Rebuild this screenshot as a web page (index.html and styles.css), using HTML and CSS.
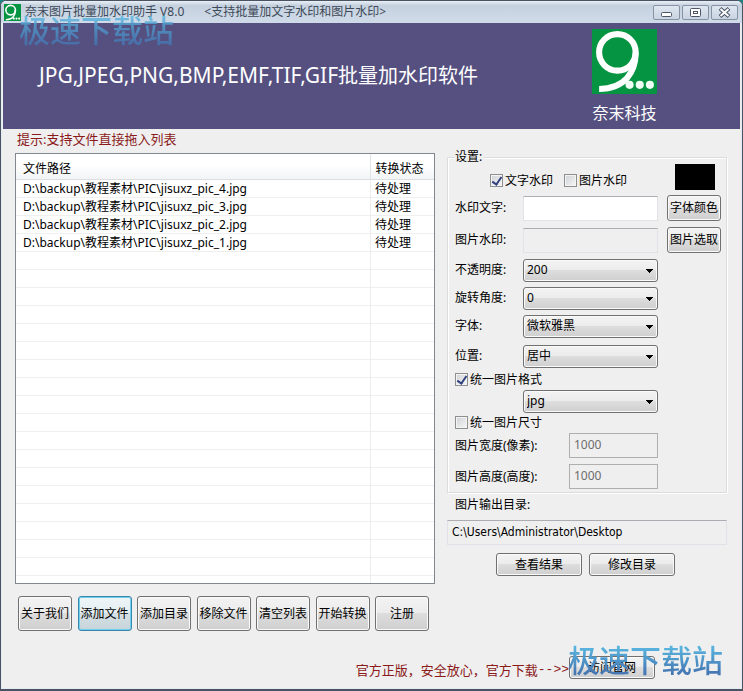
FILE: index.html
```html
<!DOCTYPE html>
<html lang="zh-CN">
<head>
  <meta charset="UTF-8">
  <meta name="viewport" content="width=device-width, initial-scale=1.0">
  <title>奈末图片批量加水印助手 V8.0</title>
  <link rel="stylesheet" href="styles.css">
</head>
<body>
  <div class="window">
    <div class="titlebar">
      <svg class="app-icon" viewBox="0 0 64 64">
        <rect width="64" height="64" fill="#059441"/>
        <circle cx="25" cy="23" r="18" fill="none" stroke="#fff" stroke-width="6"/>
        <path d="M43 23 C43 43 32 59 7 59" fill="none" stroke="#fff" stroke-width="6"/>
        <circle cx="37" cy="55" r="4" fill="#fff"/>
        <circle cx="47" cy="55" r="4" fill="#fff"/>
        <circle cx="57" cy="55" r="4" fill="#fff"/>
      </svg>
      <span class="title">奈末图片批量加水印助手 V8.0</span>
      <span class="subtitle">&lt;支持批量加文字水印和图片水印&gt;</span>
      <div class="window-buttons">
        <button type="button" aria-label="最小化">
          <svg width="26" height="14" viewBox="0 0 26 14"><rect x="7.500" y="6.500" width="10" height="4" rx="1" fill="#fff" stroke="#4b5565"/></svg>
        </button>
        <button type="button" aria-label="最大化">
          <svg width="26" height="14" viewBox="0 0 26 14"><rect x="7.500" y="2.500" width="10" height="8" rx="1" fill="#fff" stroke="#4b5565"/><rect x="10.500" y="5.500" width="4" height="2" fill="#fff" stroke="#4b5565"/></svg>
        </button>
        <button type="button" aria-label="关闭">
          <svg width="26" height="14" viewBox="0 0 26 14"><path d="M8 2.500 L17 10.500 M17 2.500 L8 10.500" stroke="#4b5565" stroke-width="4"/><path d="M8.500 3 L16.500 10 M16.500 3 L8.500 10" stroke="#fff" stroke-width="2"/></svg>
        </button>
      </div>
    </div>

    <div class="banner">
      <h1><span class="formats">JPG,JPEG,PNG,BMP,EMF,TIF,GIF</span>批量加水印软件</h1>
      <div class="brand">
        <svg class="logo" viewBox="0 0 64 64">
          <rect width="64" height="64" fill="#059441"/>
          <circle cx="25" cy="23" r="18" fill="none" stroke="#fff" stroke-width="6"/>
          <path d="M43 23 C43 43 32 59 7 59" fill="none" stroke="#fff" stroke-width="6"/>
          <circle cx="37" cy="55" r="4" fill="#f0fff4"/>
          <circle cx="47" cy="55" r="4" fill="#f0fff4"/>
          <circle cx="57" cy="55" r="4" fill="#f0fff4"/>
        </svg>
        <span>奈末科技</span>
      </div>
    </div>

    <div class="main">
      <div class="files">
        <p class="hint">提示:支持文件直接拖入列表</p>
        <div class="file-list">
          <table>
            <thead>
              <tr><th>文件路径</th><th class="state">转换状态</th></tr>
            </thead>
            <tbody>
              <tr><td>D:\backup\教程素材\PIC\jisuxz_pic_4.jpg</td><td>待处理</td></tr>
              <tr><td>D:\backup\教程素材\PIC\jisuxz_pic_3.jpg</td><td>待处理</td></tr>
              <tr><td>D:\backup\教程素材\PIC\jisuxz_pic_2.jpg</td><td>待处理</td></tr>
              <tr><td>D:\backup\教程素材\PIC\jisuxz_pic_1.jpg</td><td>待处理</td></tr>
            </tbody>
          </table>
        </div>
        <div class="actions">
          <button type="button" class="btn">关于我们</button>
          <button type="button" class="btn active">添加文件</button>
          <button type="button" class="btn">添加目录</button>
          <button type="button" class="btn">移除文件</button>
          <button type="button" class="btn">清空列表</button>
          <button type="button" class="btn">开始转换</button>
          <button type="button" class="btn">注册</button>
        </div>
      </div>

      <div class="side">
        <fieldset class="settings">
          <legend>设置:</legend>
          <div class="row modes">
            <label class="check"><input type="checkbox" checked>文字水印</label>
            <label class="check"><input type="checkbox">图片水印</label>
            <div class="swatch"></div>
          </div>
          <div class="row text-row">
            <label for="text">水印文字:</label>
            <input type="text" id="text" class="field">
            <button type="button" class="btn">字体颜色</button>
          </div>
          <div class="row text-row">
            <label for="image">图片水印:</label>
            <input type="text" id="image" class="field" readonly>
            <button type="button" class="btn">图片选取</button>
          </div>
          <div class="row">
            <label for="opacity">不透明度:</label>
            <select id="opacity"><option>200</option></select>
          </div>
          <div class="row">
            <label for="angle">旋转角度:</label>
            <select id="angle"><option>0</option></select>
          </div>
          <div class="row">
            <label for="font">字体:</label>
            <select id="font"><option>微软雅黑</option></select>
          </div>
          <div class="row text-row">
            <label for="position">位置:</label>
            <select id="position"><option>居中</option></select>
          </div>
          <div class="row check-row">
            <label class="check"><input type="checkbox" checked>统一图片格式</label>
          </div>
          <div class="row format-row">
            <select aria-label="图片格式"><option>jpg</option></select>
          </div>
          <div class="row check-row">
            <label class="check"><input type="checkbox">统一图片尺寸</label>
          </div>
          <div class="row size-row">
            <label for="width">图片宽度(像素):</label>
            <input type="text" id="width" class="field" value="1000" disabled>
          </div>
          <div class="row size-row">
            <label for="height">图片高度(高度):</label>
            <input type="text" id="height" class="field" value="1000" disabled>
          </div>
        </fieldset>

        <label class="output-label" for="output">图片输出目录:</label>
        <input type="text" id="output" class="field output" value="C:\Users\Administrator\Desktop" readonly>
        <div class="output-buttons">
          <button type="button" class="btn">查看结果</button>
          <button type="button" class="btn">修改目录</button>
        </div>
      </div>
    </div>

    <div class="footer">
      <span>官方正版，安全放心，官方下载</span><span class="arrow">--&gt;&gt;</span>
      <button type="button" class="btn">访问官网</button>
    </div>

    <div class="stamp stamp-top">极速下载站</div>
    <div class="stamp stamp-bottom">极速下载站</div>
  </div>
</body>
</html>
```

FILE: styles.css
```css
* {
  box-sizing: border-box;
}
body {
  margin: 0;
  background: #1d8583;
  font-family: "Noto Sans", "Noto Sans CJK SC", sans-serif;
  font-size: 12px;
  line-height: 18px;
  color: #000;
}
button, input, select {
  font: inherit;
  color: inherit;
  margin: 0;
}
.window {
  position: relative;
  display: flex;
  flex-direction: column;
  min-height: 100vh;
  padding: 0 2px 2px;
  border: 1px solid #4a5361;
  border-bottom-width: 2px;
  border-radius: 6px 6px 0 0;
  background: #efefef;
  box-shadow: inset 0 0 0 1px #e3eaf2;
  overflow: hidden;
}

/* title bar */
.titlebar {
  display: flex;
  align-items: center;
  height: 22px;
  margin: 0 -2px;
  padding: 0 4px 0 3px;
  background: linear-gradient(#e9eff6, #c5d1df 20%, #cfdbe8);
  color: #3d4958;
  white-space: nowrap;
}
.app-icon {
  width: 17px;
  height: 17px;
  margin-right: 4px;
}
.subtitle {
  margin-left: 20px;
}
.window-buttons {
  display: flex;
  gap: 2px;
  margin-left: auto;
}
.window-buttons button {
  width: 27px;
  height: 15px;
  padding: 0;
  border: 1px solid #8793a3;
  border-radius: 2px;
  background: linear-gradient(#dfe7f0, #c8d4e1);
  overflow: hidden;
}
.window-buttons svg {
  display: block;
}

/* banner */
.banner {
  display: flex;
  justify-content: space-between;
  height: 106px;
  padding: 6px 83px 0 36px;
  background: #555080;
  color: #fff;
}
.banner h1 {
  margin: 32px 0 0;
  font-size: 20px;
  font-weight: normal;
  line-height: 28px;
  white-space: nowrap;
}
.formats {
  font-size: 21px;
}
.brand {
  display: flex;
  flex-direction: column;
  align-items: center;
  font-size: 16px;
  line-height: 24px;
}
.logo {
  width: 65px;
  height: 65px;
  margin-bottom: 7px;
}

/* file list */
.main {
  flex: 1;
  display: flex;
  gap: 12px;
  padding: 0 13px 0 12px;
}
.files {
  flex: 3;
  display: flex;
  flex-direction: column;
}
.hint {
  height: 24px;
  margin: 0;
  padding: 1px 2px;
  font-size: 13px;
  color: #8b1a1a;
}
.file-list {
  flex: 1;
  border: 1px solid #828790;
  background:
    linear-gradient(#ededed, #ededed) right 63px top 0 / 1px 100% no-repeat,
    repeating-linear-gradient(#fff 0 17px, #efefef 17px 18px) 0 26px no-repeat,
    #fff;
}
table {
  width: 100%;
  border-collapse: collapse;
  table-layout: fixed;
}
th {
  height: 26px;
  padding: 3px 0 0 7px;
  text-align: left;
  font-weight: normal;
  background: linear-gradient(#fff 40%, #f2f3f5);
  box-shadow: inset 0 -1px #dcdfe2;
}
td {
  height: 18px;
  padding: 0 0 0 7px;
  white-space: nowrap;
}
.state {
  width: 64px;
  border-left: 1px solid #e2e5e8;
}
th:last-child, td:last-child {
  padding-left: 5px;
}
.actions {
  display: flex;
  justify-content: space-between;
  padding: 12px 6px 0 3px;
}

/* controls */
.btn {
  width: 54px;
  height: 26px;
  padding: 0;
  border: 1px solid #707070;
  border-radius: 3px;
  background: linear-gradient(#f3f3f3, #ebebeb 50%, #dddddd 50%, #cfcfcf);
  box-shadow: inset 0 0 0 1px #fafafa;
  white-space: nowrap;
}
.actions .btn {
  height: 35px;
}
.btn.active {
  border-color: #3a86ad;
  background: linear-gradient(#eef5f7, #e4eef2 50%, #d5e0e4 50%, #c6d4d9);
  box-shadow: inset 0 0 0 1px #6fd0ee;
}
.field {
  width: 135px;
  height: 25px;
  padding: 0 4px;
  border: 1px solid #dfe2e6;
  border-top-color: #abadb3;
  background: #fff;
}
.field:read-only {
  background: #efefef;
}
.field:disabled {
  border-color: #afafaf;
  color: #6d6d6d;
}
select {
  width: 135px;
  height: 23px;
  padding: 0 3px;
  border: 1px solid #707070;
  border-radius: 3px;
  appearance: none;
  background:
    linear-gradient(#000, #000) right 4px top 9px / 7px 1px no-repeat,
    linear-gradient(#000, #000) right 5px top 10px / 5px 1px no-repeat,
    linear-gradient(#000, #000) right 6px top 11px / 3px 1px no-repeat,
    linear-gradient(#000, #000) right 7px top 12px / 1px 1px no-repeat,
    linear-gradient(#f3f3f3, #ebebeb 50%, #dddddd 50%, #cfcfcf);
  box-shadow: inset 0 0 0 1px #fafafa;
}
.check {
  display: flex;
  align-items: center;
  gap: 2px;
}
.check input {
  position: relative;
  width: 13px;
  height: 13px;
  border: 1px solid #8e8f8f;
  appearance: none;
  background: linear-gradient(135deg, #cfd2d6, #f6f6f6);
  box-shadow: inset 0 0 0 1px #f4f4f4;
}
.check input:checked::after {
  content: "";
  position: absolute;
  left: 3px;
  top: 0;
  width: 4px;
  height: 8px;
  border: solid #31407f;
  border-width: 0 2px 2px 0;
  transform: rotate(35deg);
}

/* settings */
.side {
  flex: 2;
  display: flex;
  flex-direction: column;
}
.settings {
  margin: 19px 0 0;
  padding: 0 5px 0 7px;
  border: 1px solid #dadde0;
  box-shadow: inset 1px 1px #fff, 1px 1px #fff;
}
.settings legend {
  height: 18px;
  margin-bottom: -2px;
  padding: 0 2px 0 0;
  background: #efefef;
}
.row {
  display: flex;
  align-items: center;
  height: 28px;
}
.row > label:not(.check) {
  width: 68px;
}
.modes {
  gap: 11px;
  padding-left: 35px;
}
.modes .check {
  padding-top: 5px;
}
.swatch {
  width: 40px;
  height: 26px;
  margin: 0 6px 2px auto;
  background: #000;
}
.text-row {
  height: 32px;
}
.text-row .btn {
  margin-left: auto;
}
.check-row {
  height: 15px;
}
.format-row {
  padding-left: 68px;
}
.row.size-row {
  height: 31px;
}
.row.size-row > label {
  width: 114px;
}
.size-row .field {
  width: 89px;
  padding-bottom: 3px;
}
.output-label {
  margin: 3px 0 6px;
  padding-left: 8px;
}
.output {
  width: 100%;
  padding-bottom: 2px;
  font-family: "DejaVu Sans Condensed", "Noto Sans CJK SC", sans-serif;
  font-size: 12px;
}
.output-buttons {
  display: flex;
  gap: 7px;
  justify-content: center;
  margin-top: 8px;
  padding-right: 3px;
}
.output-buttons .btn, .footer .btn {
  width: 86px;
  height: 23px;
}

/* footer */
.footer {
  display: flex;
  justify-content: flex-end;
  align-items: center;
  padding: 25px 85px 8px 0;
  font-size: 13px;
  color: #8b1a1a;
}
.footer span {
  padding-top: 4px;
}
.arrow {
  font-family: "Liberation Mono", monospace;
}
.footer .btn {
  font-size: 12px;
  color: #000;
}

/* download site stamp, lies over the window */
.stamp {
  position: absolute;
  font-size: 31px;
  font-weight: 500;
  line-height: 36px;
  background: linear-gradient(#58b4de 15%, #4678b4 85%);
  background-clip: text;
  -webkit-background-clip: text;
  color: transparent;
  pointer-events: none;
}
.stamp-top {
  left: 18px;
  top: 11px;
  opacity: 0.8;
}
.stamp-bottom {
  right: 19px;
  bottom: 11px;
}
```
